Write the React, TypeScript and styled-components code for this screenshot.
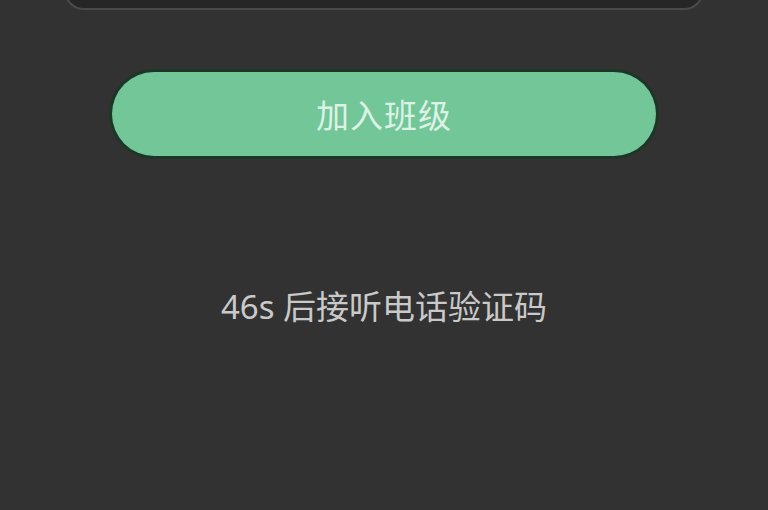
import styled, { createGlobalStyle } from 'styled-components';

const GlobalStyle = createGlobalStyle`
  html, body {
    margin: 0;
    padding: 0;
    background: #323232;
  }
  body {
    font-family: 'Noto Sans', 'Noto Sans CJK SC', sans-serif;
  }
`;

const Screen = styled.div`
  width: 768px;
  height: 510px;
  overflow: hidden;
  background: #323232;
  display: flex;
  flex-direction: column;
  align-items: center;
`;

const InputBox = styled.div`
  width: 640px;
  height: 40px;
  margin-top: -30px;
  box-sizing: border-box;
  background: #262626;
  border: 2px solid #4a4a4a;
  border-radius: 22px;
  flex-shrink: 0;
`;

const JoinButton = styled.button`
  margin-top: 62px;
  width: 544px;
  height: 84px;
  border: none;
  border-radius: 42px;
  background: #73c698;
  box-shadow: 0 0 0 3px #1e3628;
  color: #dcf2e5;
  font-family: 'Noto Sans CJK SC', sans-serif;
  font-size: 33px;
  letter-spacing: 1px;
  cursor: pointer;
  flex-shrink: 0;
`;

const Countdown = styled.p`
  margin: 131px 0 0;
  color: #c9c9c9;
  font-family: 'Noto Sans', 'Noto Sans CJK SC', sans-serif;
  font-size: 33px;
  line-height: 40px;
`;

export default function App() {
  return (
    <>
      <GlobalStyle />
      <Screen>
        <InputBox />
        <JoinButton>加入班级</JoinButton>
        <Countdown>46s 后接听电话验证码</Countdown>
      </Screen>
    </>
  );
}
